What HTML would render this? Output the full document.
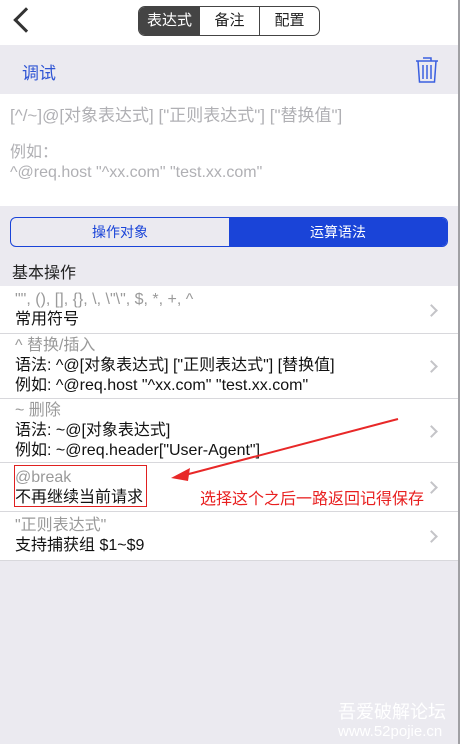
<!DOCTYPE html>
<html><head><meta charset="utf-8"><style>
*{margin:0;padding:0;box-sizing:border-box}
body{width:460px;height:744px;background:#ebeaf0;font-family:"Liberation Sans","Noto Sans CJK SC",sans-serif;position:relative;overflow:hidden}
.abs{position:absolute}
.row{position:absolute;left:0;width:458px;background:#fff;border-bottom:1px solid #d8d8dc}
.row .t{position:absolute;left:15px;font-size:16px;line-height:20px;color:#111;white-space:nowrap}
.g{color:#9a9a9a}
.chev{position:absolute;right:22px;width:9px;height:9px;border-right:2px solid #c4c4c8;border-top:2px solid #c4c4c8;transform:rotate(45deg)}
</style></head><body>
<div class="abs" style="left:458px;top:0;width:2px;height:744px;background:#a0a0a4"></div>
<div class="abs" style="left:0;top:0;width:458px;height:45px;background:#fff"></div>
<div class="abs" style="left:17px;top:11px;width:18px;height:18px;border-left:3px solid #333;border-bottom:3px solid #333;transform:rotate(45deg)"></div>
<div class="abs" style="left:138px;top:6px;width:182px;height:30px;border:1.5px solid #444;border-radius:7px;overflow:hidden;display:flex;font-size:15px;line-height:27px;text-align:center">
<div style="width:61px;background:#444;color:#fff">表达式</div>
<div style="width:60px;border-right:1.5px solid #444;color:#222">备注</div>
<div style="flex:1;color:#222">配置</div></div>
<div class="abs" style="left:22px;top:59px;font-size:17px;color:#2f55d4">调试</div>
<svg class="abs" style="left:414px;top:55px" width="26" height="30" viewBox="0 0 26 30" fill="none" stroke="#3a5fe0" stroke-width="1.5"><path d="M9 3h8v3M2 6h22M4 6l1.5 21h15L22 6M9 10v14M13 10v14M17 10v14"/></svg>
<div class="abs" style="left:0;top:94px;width:458px;height:112px;background:#fff"></div>
<div class="abs" style="left:10px;top:101px;font-size:17px;color:#b0b0b4;white-space:nowrap">[^/~]@[对象表达式] ["正则表达式"] ["替换值"]</div>
<div class="abs" style="left:10px;top:143px;font-size:16px;line-height:20px;color:#b0b0b4">例如：<br>^@req.host "^xx.com" "test.xx.com"</div>
<div class="abs" style="left:10px;top:217px;width:438px;height:30px;border:1px solid #1a44d8;border-radius:6px;overflow:hidden;display:flex;font-size:14px;line-height:28px;text-align:center">
<div style="width:218px;color:#1a44d8">操作对象</div><div style="flex:1;background:#1a44d8;color:#fff">运算语法</div></div>
<div class="abs" style="left:12px;top:259px;font-size:16px;color:#222">基本操作</div>
<div class="row" style="top:286px;height:48px"><div class="t" style="top:4px"><span class="g">"", (), [], {}, \, \"\", $, *, +, ^</span><br>常用符号</div><div class="chev" style="top:20px"></div></div>
<div class="row" style="top:334px;height:65px"><div class="t" style="top:2px"><span class="g">^ 替换/插入</span><br>语法: ^@[对象表达式] ["正则表达式"] [替换值]<br>例如: ^@req.host "^xx.com" "test.xx.com"</div><div class="chev" style="top:28px"></div></div>
<div class="row" style="top:399px;height:64px"><div class="t" style="top:2px"><span class="g">~ 删除</span><br>语法: ~@[对象表达式]<br>例如: ~@req.header["User-Agent"]</div><div class="chev" style="top:28px"></div></div>
<div class="row" style="top:463px;height:49px"><div class="t" style="top:5px"><span class="g">@break</span><br>不再继续当前请求</div><div class="chev" style="top:20px"></div></div>
<div class="row" style="top:512px;height:49px"><div class="t" style="top:4px"><span class="g">"正则表达式"</span><br>支持捕获组 $1~$9</div><div class="chev" style="top:20px"></div></div>
<div class="abs" style="left:14px;top:465px;width:133px;height:42px;border:1.5px solid #e02020"></div>
<div class="abs" style="left:200px;top:485px;font-size:16px;color:#e82020;white-space:nowrap">选择这个之后一路返回记得保存</div>
<svg class="abs" style="left:0;top:0" width="460" height="744"><line x1="398" y1="419" x2="185" y2="475" stroke="#e82828" stroke-width="2"/><path d="M171 478L190 468L188 481Z" fill="#e82828"/></svg>
<div class="abs" style="left:338px;top:698px;font-size:18px;color:#fff">吾爱破解论坛</div>
<div class="abs" style="left:338px;top:723px;font-size:15px;color:#fff">www.52pojie.cn</div>
</body></html>
